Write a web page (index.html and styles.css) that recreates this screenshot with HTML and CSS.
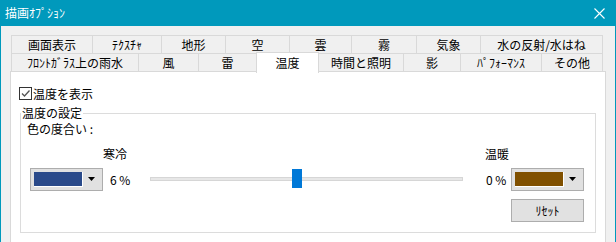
FILE: index.html
```html
<!DOCTYPE html>
<html lang="ja">
<head>
<meta charset="utf-8">
<title>描画ｵﾌﾟｼｮﾝ</title>
<link rel="stylesheet" href="styles.css">
</head>
<body>
<div class="window">
  <div class="titlebar">
    <span class="title">描画ｵﾌﾟｼｮﾝ</span>
    <svg class="close" width="11" height="11" viewBox="0 0 11 11"><path d="M0.5 0.5 L10.5 10.5 M10.5 0.5 L0.5 10.5" stroke="#fff" stroke-width="1.1" fill="none"/></svg>
  </div>
  <div class="body">
    <div class="tabs">
      <div class="tabrow r1">
        <div class="tab">画面表示</div>
        <div class="tab">ﾃｸｽﾁｬ</div>
        <div class="tab">地形</div>
        <div class="tab">空</div>
        <div class="tab">雲</div>
        <div class="tab">霧</div>
        <div class="tab">気象</div>
        <div class="tab">水の反射/水はね</div>
      </div>
      <div class="tabrow r2">
        <div class="tab">ﾌﾛﾝﾄｶﾞﾗｽ上の雨水</div>
        <div class="tab">風</div>
        <div class="tab">雷</div>
        <div class="tab sel">温度</div>
        <div class="tab">時間と照明</div>
        <div class="tab">影</div>
        <div class="tab">ﾊﾟﾌｫｰﾏﾝｽ</div>
        <div class="tab">その他</div>
      </div>
    </div>
    <div class="panel">
      <label class="check">
        <span class="box"><svg width="11" height="11" viewBox="0 0 11 11"><path d="M2 5.5 L4.5 8 L9.5 2.5" stroke="#555" stroke-width="1.3" fill="none"/></svg></span>
        温度を表示
      </label>
      <div class="group">
        <span class="legend">温度の設定</span>
        <div class="hue">色の度合い&nbsp;:</div>
        <div class="grid">
          <span class="cold">寒冷</span>
          <span class="warm">温暖</span>
          <div class="combo left">
            <span class="swatch blue"></span>
            <svg class="arrow" width="7" height="4" viewBox="0 0 7 4"><path d="M0 0 H7 L3.5 4 Z" fill="#000"/></svg>
          </div>
          <span class="pct p6">6 %</span>
          <div class="slider">
            <div class="track"></div>
            <div class="thumb" style="left:142px"></div>
          </div>
          <span class="pct p0">0 %</span>
          <div class="combo right">
            <span class="swatch brown"></span>
            <svg class="arrow" width="7" height="4" viewBox="0 0 7 4"><path d="M0 0 H7 L3.5 4 Z" fill="#000"/></svg>
          </div>
          <button class="reset">ﾘｾｯﾄ</button>
        </div>
      </div>
    </div>
  </div>
</div>
</body>
</html>
```
FILE: styles.css
```css
html, body {
  margin: 0;
  padding: 0;
}
body {
  width: 616px;
  height: 242px;
  overflow: hidden;
  font-family: "Noto Sans CJK JP", "Noto Sans", sans-serif;
  font-size: 12px;
  color: #000;
}
.window {
  height: 242px;
  box-sizing: border-box;
  border-left: 1px solid #0099bc;
  border-right: 1px solid #0099bc;
  background: #f0f0f0;
  display: flex;
  flex-direction: column;
}
.titlebar {
  height: 26px;
  flex: none;
  background: #0099bc;
  color: #fff;
  display: flex;
  align-items: center;
  padding-left: 4px;
}
.title {
  line-height: 14px;
}
.close {
  margin-left: auto;
  margin-right: 10px;
}
.body {
  padding-top: 9px;
  flex: 1;
  min-height: 0;
  display: flex;
  flex-direction: column;
}
.tabs {
  margin-left: 10px;
}
.tabrow {
  display: flex;
  height: 19px;
}
.r2 {
  margin-top: -1px;
}
.tab {
  box-sizing: border-box;
  height: 19px;
  border: 1px solid #d9d9d9;
  margin-left: -1px;
  display: flex;
  align-items: center;
  justify-content: center;
  line-height: 14px;
  background: #f0f0f0;
  white-space: nowrap;
}
.tab:first-child {
  margin-left: 0;
}
.r1 .tab:nth-child(1) { width: 82px; }
.r1 .tab:nth-child(2) { width: 70px; }
.r1 .tab:nth-child(3) { width: 65px; }
.r1 .tab:nth-child(4) { width: 65px; }
.r1 .tab:nth-child(5) { width: 63px; }
.r1 .tab:nth-child(6) { width: 66px; }
.r1 .tab:nth-child(7) { width: 65px; }
.r1 .tab:nth-child(8) { width: 123px; }
.r2 .tab:nth-child(1) { width: 128px; }
.r2 .tab:nth-child(2) { width: 61px; }
.r2 .tab:nth-child(3) { width: 59px; }
.r2 .tab:nth-child(4) { width: 63px; }
.r2 .tab:nth-child(5) { width: 86px; }
.r2 .tab:nth-child(6) { width: 58px; }
.r2 .tab:nth-child(7) { width: 82px; }
.r2 .tab:nth-child(8) { width: 62px; }
.tab.sel {
  background: #fff;
  height: 21px;
  margin-top: -1px;
  border-bottom: none;
  position: relative;
  z-index: 2;
}
.panel {
  margin-top: -1px;
  margin-left: 9px;
  width: 596px;
  flex: 1;
  min-height: 0;
  box-sizing: border-box;
  background: #fff;
  border: 1px solid #d9d9d9;
  border-bottom: none;
  padding-top: 15px;
}
.check {
  display: flex;
  align-items: center;
  margin-left: 8px;
  height: 13px;
  line-height: 14px;
}
.box {
  width: 13px;
  height: 13px;
  box-sizing: border-box;
  border: 1px solid #333;
  background: #fff;
  margin-right: 1px;
  display: flex;
}
.group {
  position: relative;
  margin: 13px 0 0 9px;
  width: 576px;
  height: 120px;
  box-sizing: border-box;
  border: 1px solid #dcdcdc;
}
.legend {
  position: absolute;
  top: -8px;
  left: 0;
  background: #fff;
  padding: 0 1px;
  line-height: 14px;
}
.hue {
  margin: 8px 0 0 6px;
  line-height: 14px;
}
.grid {
  display: grid;
  grid-template-columns: 73px 47px 313px 23px 25px 73px;
  grid-template-rows: 14px 23px 24px;
  row-gap: 7px;
  margin: 11px 0 0 9px;
  line-height: 14px;
}
.cold {
  grid-column: 2;
  grid-row: 1;
}
.warm {
  grid-column: 5;
  grid-row: 1;
  margin-left: -1px;
  white-space: nowrap;
}
.combo {
  grid-row: 2;
  box-sizing: border-box;
  height: 23px;
  border: 1px solid #adadad;
  background: #e1e1e1;
  display: flex;
  align-items: center;
}
.combo.left { grid-column: 1; }
.combo.right { grid-column: 6; }
.swatch {
  width: 49px;
  height: 15px;
  margin-left: 3px;
  box-sizing: border-box;
  border-right: 1px solid #fff;
  border-bottom: 1px solid #fff;
}
.swatch.blue { background: #2a4a8a; }
.swatch.brown { background: #805000; }
.arrow {
  margin-left: 5px;
  margin-top: -1px;
}
.pct {
  grid-row: 2;
  align-self: center;
  white-space: pre;
}
.p6 {
  grid-column: 2;
  padding-left: 7px;
}
.p0 {
  grid-column: 5;
}
.slider {
  grid-column: 3;
  grid-row: 2;
  position: relative;
}
.track {
  margin-top: 9px;
  height: 4px;
  box-sizing: border-box;
  background: #e7e7e7;
  border: 1px solid #d6d6d6;
}
.thumb {
  position: absolute;
  top: 1px;
  width: 10px;
  height: 19px;
  background: #0078d7;
}
.reset {
  grid-column: 6;
  grid-row: 3;
  align-self: end;
  height: 23px;
  box-sizing: border-box;
  margin: 0;
  padding: 0;
  border: 1px solid #adadad;
  background: #e1e1e1;
  font-family: inherit;
  font-size: 12px;
  color: #000;
  line-height: 14px;
}
```
